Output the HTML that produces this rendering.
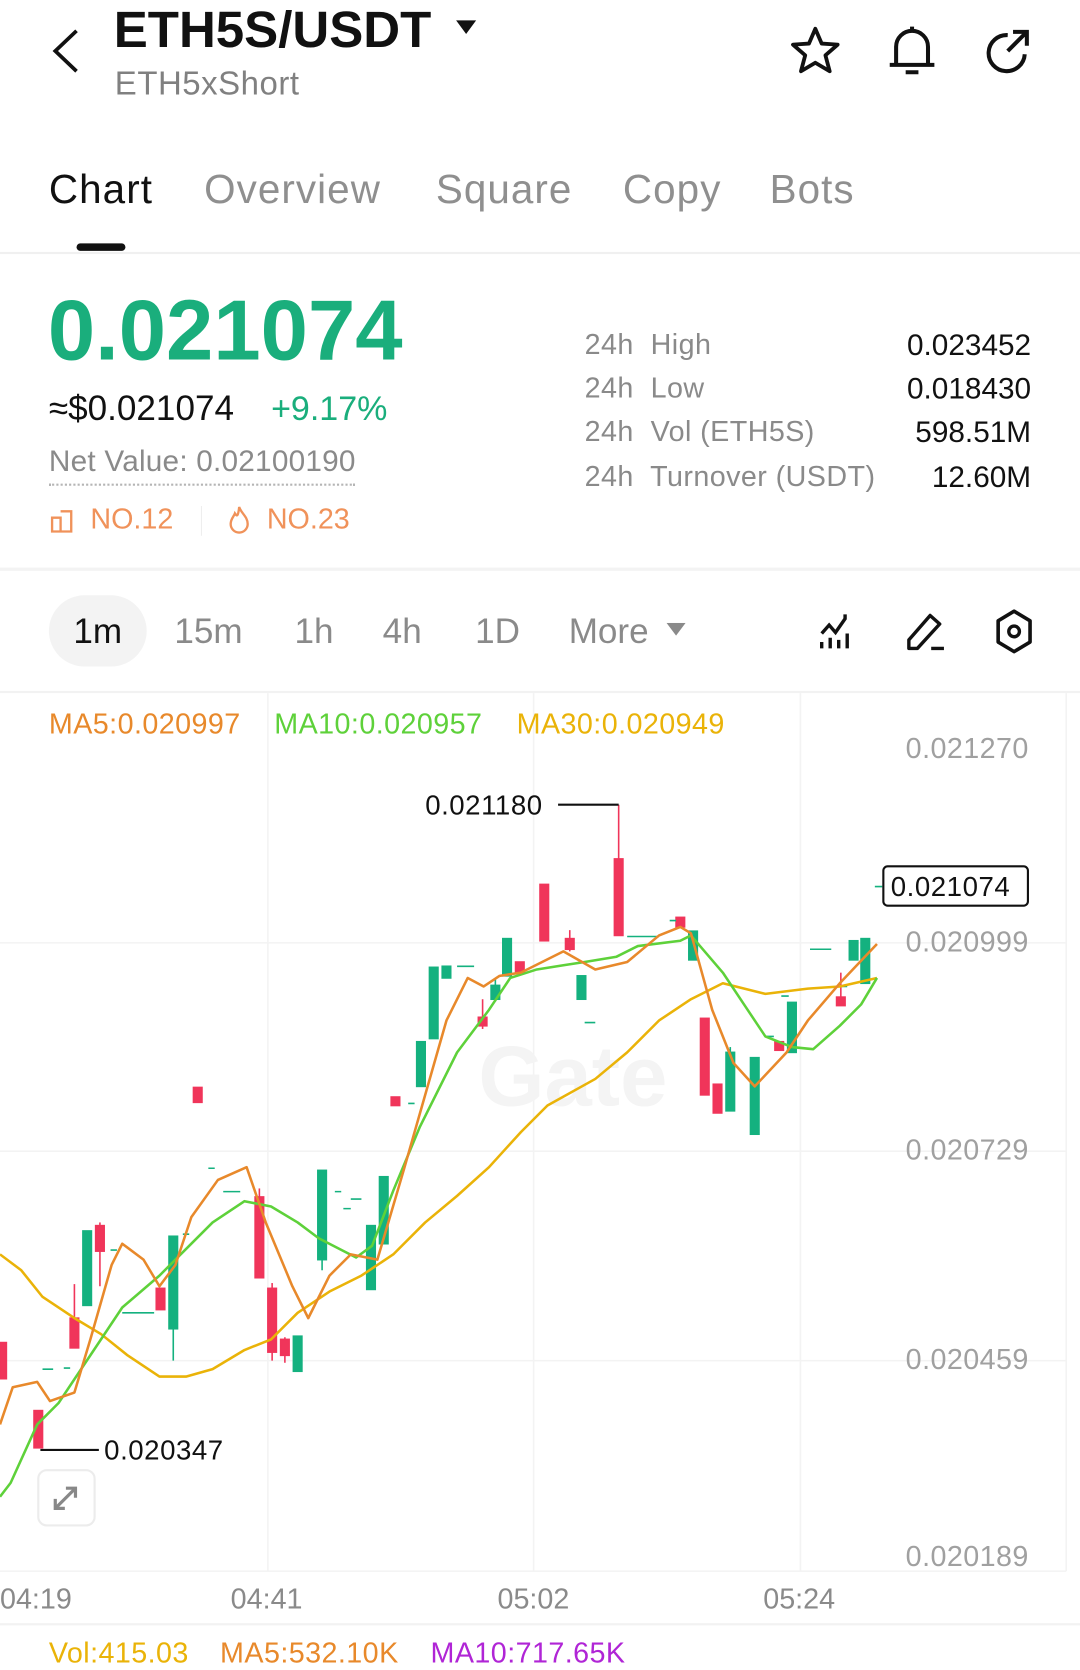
<!DOCTYPE html>
<html><head><meta charset="utf-8"><style>
html,body{margin:0;padding:0;background:#fff;overflow:hidden}
body{width:1080px;height:1666px}
#w{position:absolute;left:0;top:0;width:1016px;height:1568px;transform:scale(1.063);transform-origin:0 0;font-family:"Liberation Sans",sans-serif;color:#111}
.a{position:absolute;white-space:nowrap}
.g{color:#8a8a8a}
.tab{position:absolute;top:158px;font-size:38px;color:#8f8f8f;letter-spacing:1px}
.st{position:absolute;left:550px;font-size:27px;color:#8a8a8a;letter-spacing:.4px}
.sv{position:absolute;right:46px;font-size:28px;color:#111}
.iv{position:absolute;top:575px;font-size:33px;color:#8a8a8a}
.ya{position:absolute;left:852px;font-size:27px;color:#a0a0a0;letter-spacing:.4px}
.xa{position:absolute;top:1489px;font-size:27px;color:#8a8a8a}
</style></head><body><div id="w">
<svg class="a" style="left:44px;top:26px" width="36" height="44" viewBox="0 0 36 44"><path d="M28 3 L8 22 L28 41" fill="none" stroke="#111" stroke-width="3.5"/></svg>
<div class="a" style="left:107px;top:1px;font-size:48px;font-weight:bold;letter-spacing:0px">ETH5S/USDT</div>
<svg class="a" style="left:429px;top:19px" width="20" height="14"><path d="M0 0 H19 L9.5 13Z" fill="#111"/></svg>
<div class="a g" style="left:108px;top:61px;font-size:31px;color:#808080;letter-spacing:.5px">ETH5xShort</div>
<svg class="a" style="left:742px;top:24px" width="50" height="46" viewBox="0 0 50 46"><path d="M25 3 L31 17 L46 18 L34.5 28 L38.5 43 L25 35 L11.5 43 L15.5 28 L4 18 L19 17Z" fill="none" stroke="#111" stroke-width="3.6" stroke-linejoin="round"/></svg>
<svg class="a" style="left:834px;top:22px" width="48" height="50" viewBox="0 0 48 50"><path d="M24 3 V7 M9 39 V22 A15 15 0 0 1 39 22 V39 M3 39 H45 M18 46 H30" fill="none" stroke="#111" stroke-width="3.8"/></svg>
<svg class="a" style="left:924px;top:24px" width="48" height="48" viewBox="0 0 48 48"><path d="M40 27 A17 17 0 1 1 24 9" fill="none" stroke="#111" stroke-width="3.8"/><path d="M24 24 L41 7 M29 6 H42 V19" fill="none" stroke="#111" stroke-width="3.8"/></svg>
<div class="tab" style="left:46px;color:#111">Chart</div>
<div class="tab" style="left:192px">Overview</div>
<div class="tab" style="left:410px">Square</div>
<div class="tab" style="left:586px">Copy</div>
<div class="tab" style="left:724px">Bots</div>
<div class="a" style="left:72px;top:229px;width:46px;height:7px;border-radius:4px;background:#111"></div>
<div class="a" style="left:0;top:237px;width:1016px;height:2px;background:#f0f0f0"></div>
<div class="a" style="left:45px;top:265px;font-size:80px;font-weight:bold;color:#1aae7c;letter-spacing:0px">0.021074</div>
<div class="a" style="left:46px;top:365px;font-size:33px">≈$0.021074</div>
<div class="a" style="left:255px;top:366px;font-size:32px;color:#1aae7c">+9.17%</div>
<div class="a" style="left:46px;top:418px;font-size:28px;color:#8a8a8a;letter-spacing:.2px">Net Value: 0.02100190</div>
<div class="a" style="left:46px;top:455px;width:288px;border-top:2px dotted #b5b5b5"></div>
<svg class="a" style="left:47px;top:478px" width="24" height="24"><path d="M2 9 H10 V22 H2Z M10 3 H20 V22 H10" fill="none" stroke="#f0925a" stroke-width="2.2"/></svg>
<div class="a" style="left:85px;top:473px;font-size:27px;color:#f0925a">NO.12</div>
<div class="a" style="left:189px;top:476px;width:1px;height:28px;background:#eee"></div>
<svg class="a" style="left:213px;top:475px" width="24" height="28"><path d="M12 2 C14 8 20 11 20 18 A8 8 0 0 1 4 18 C4 13 7 11 8 8 C10 11 11 11 12 2Z" fill="none" stroke="#f0925a" stroke-width="2.2"/></svg>
<div class="a" style="left:251px;top:473px;font-size:27px;color:#f0925a">NO.23</div>
<div class="st" style="top:309px">24h&nbsp; High</div><div class="sv" style="top:309px">0.023452</div>
<div class="st" style="top:350px">24h&nbsp; Low</div><div class="sv" style="top:350px">0.018430</div>
<div class="st" style="top:391px">24h&nbsp; Vol (ETH5S)</div><div class="sv" style="top:391px">598.51M</div>
<div class="st" style="top:433px">24h&nbsp; Turnover (USDT)</div><div class="sv" style="top:433px">12.60M</div>
<div class="a" style="left:0;top:534px;width:1016px;height:3px;background:#f3f3f3"></div>
<div class="a" style="left:46px;top:560px;width:92px;height:67px;border-radius:34px;background:#f3f3f3"></div>
<div class="iv" style="left:69px;color:#111">1m</div>
<div class="iv" style="left:164px">15m</div>
<div class="iv" style="left:277px">1h</div>
<div class="iv" style="left:360px">4h</div>
<div class="iv" style="left:447px">1D</div>
<div class="iv" style="left:535px">More</div>
<svg class="a" style="left:627px;top:586px" width="19" height="13"><path d="M0 0 H18 L9 12Z" fill="#8a8a8a"/></svg>
<svg class="a" style="left:770px;top:574px" width="40" height="40" viewBox="0 0 40 40"><path d="M3 22 L10 14 L16 21 L25 8 L25 4 M3 36 V30 M11 36 V26 M19 36 V28 M27 36 V22" fill="none" stroke="#111" stroke-width="3.2"/></svg>
<svg class="a" style="left:851px;top:574px" width="42" height="40" viewBox="0 0 42 40"><path d="M4 36 V28 L24 5 L33 13 L12 36Z M25 36 H37" fill="none" stroke="#111" stroke-width="3.2" stroke-linejoin="round"/></svg>
<svg class="a" style="left:934px;top:572px" width="40" height="44" viewBox="0 0 40 44"><path d="M20 3 L35 12 V32 L20 41 L5 32 V12Z" fill="none" stroke="#111" stroke-width="3.4" stroke-linejoin="round"/><circle cx="20" cy="22" r="5" fill="none" stroke="#111" stroke-width="3.2"/></svg>
<div class="a" style="left:0;top:650px;width:1016px;height:2px;background:#f2f2f2"></div>
<svg class="a" style="left:0;top:0" width="1016" height="1568">
<g stroke="#f3f3f3" stroke-width="1.5"><path d="M252 652 V1478 M502 652 V1478 M753 652 V1478 M1003 652 V1478 M0 887 H1003 M0 1083 H1003 M0 1280 H1003 M0 1478 H1003"/></g>
<text x="450" y="1040" font-family="Liberation Sans" font-weight="bold" font-size="80" fill="#f4f4f4">Gate</text>
<g fill="#f0355a" stroke="#f0355a" stroke-width="1.5">
<rect x="0" y="1263" width="6" height="34"/><rect x="32" y="1327" width="8" height="35"/>
<path d="M70 1208 V1268"/><rect x="66" y="1240" width="8" height="28"/>
<path d="M94 1150 V1210"/><rect x="90" y="1153" width="8" height="24"/>
<rect x="147" y="1212" width="8" height="20"/><rect x="182" y="1023" width="8" height="14"/>
<path d="M244 1118 V1202"/><rect x="240" y="1126" width="8" height="76"/>
<path d="M256 1207 V1280"/><rect x="252" y="1212" width="8" height="60"/>
<path d="M268 1258 V1282"/><rect x="264" y="1260" width="8" height="15"/>
<rect x="368" y="1032" width="8" height="8"/>
<path d="M454 940 V968"/><rect x="450" y="957" width="8" height="8"/>
<rect x="485" y="905" width="8" height="10"/><rect x="508" y="832" width="8" height="53"/>
<path d="M536 875 V895"/><rect x="532" y="883" width="8" height="10"/>
<path d="M582 757 V880"/><rect x="578" y="808" width="8" height="72"/>
<rect x="636" y="863" width="8" height="9"/><rect x="659" y="958" width="8" height="72"/>
<rect x="671" y="1020" width="8" height="27"/><rect x="729" y="980" width="8" height="8"/>
<path d="M791 915 V945"/><rect x="787" y="938" width="8" height="8"/>
</g>
<g fill="#14b17f" stroke="#14b17f" stroke-width="1.5">
<rect x="78" y="1158" width="8" height="70"/><path d="M163 1163 V1280"/><rect x="159" y="1163" width="8" height="87"/>
<rect x="276" y="1257" width="8" height="33"/><path d="M303 1101 V1195"/><rect x="299" y="1101" width="8" height="84"/>
<rect x="345" y="1153" width="8" height="60"/><rect x="357" y="1107" width="8" height="63"/>
<rect x="392" y="980" width="8" height="42"/><rect x="404" y="910" width="8" height="67"/><rect x="416" y="909" width="8" height="11"/>
<path d="M466 920 V942"/><rect x="462" y="927" width="8" height="13"/><rect x="473" y="883" width="8" height="35"/>
<rect x="543" y="918" width="8" height="22"/><rect x="648" y="876" width="8" height="27"/>
<path d="M687 985 V1045"/><rect x="683" y="990" width="8" height="55"/><rect x="706" y="995" width="8" height="72"/>
<rect x="741" y="943" width="8" height="47"/><rect x="799" y="885" width="8" height="18"/><rect x="810" y="883" width="8" height="42"/>
<path d="M40 1288 H50 M60 1287 H66 M104 1176 H110 M115 1235 H145 M172 1161 H178 M196 1099 H202 M210 1121 H226 M315 1121 H321 M323 1137 H330 M330 1128 H340 M384 1038 H390 M430 909 H446 M550 962 H560 M590 881 H620 M630 866 H636 M762 893 H782 M790 928 H797 M720 975 H728 M735 937 H742 M823 834 H830"/>
</g>
<g fill="none" stroke-width="2.4" stroke-linejoin="round">
<polyline stroke="#eab308" points="0,1180 20,1195 40,1220 70,1240 95,1255 120,1275 150,1295 175,1295 200,1288 230,1270 255,1260 280,1235 310,1215 340,1200 370,1180 400,1150 430,1125 460,1098 490,1065 515,1040 560,1015 590,990 620,960 650,940 680,925 720,935 760,930 790,928 825,920"/>
<polyline stroke="#5ed13a" points="0,1408 10,1395 35,1340 55,1320 75,1290 95,1260 115,1230 150,1200 180,1170 200,1150 230,1130 255,1135 280,1150 300,1165 335,1183 350,1172 370,1120 395,1060 430,990 460,950 480,920 505,912 530,908 550,905 580,900 600,890 640,885 650,880 680,915 700,945 720,975 745,985 765,987 790,965 810,945 825,920"/>
<polyline stroke="#e8892b" points="0,1340 12,1305 35,1300 47,1318 70,1310 85,1260 105,1190 115,1170 135,1185 150,1210 165,1190 180,1145 205,1110 232,1098 250,1150 275,1210 290,1240 310,1200 330,1180 355,1185 380,1100 400,1030 420,960 440,920 455,928 470,918 490,915 510,905 530,895 560,912 590,905 620,880 640,872 650,878 670,950 690,1000 710,1022 740,990 760,960 790,925 825,888"/>
</g>
<path d="M525 757 H582 M38 1364 H93" stroke="#111" stroke-width="2"/>
<text x="400" y="766" font-family="Liberation Sans" font-size="26" fill="#111" letter-spacing=".5">0.021180</text>
<text x="98" y="1373" font-family="Liberation Sans" font-size="26" fill="#111" letter-spacing=".5">0.020347</text>
<rect x="831" y="815" width="136" height="37" rx="4" fill="#fff" stroke="#111" stroke-width="2"/>
<text x="838" y="843" font-family="Liberation Sans" font-size="26" fill="#111" letter-spacing=".5">0.021074</text>
<rect x="36" y="1383" width="53" height="52" rx="8" fill="#fff" stroke="#ececec" stroke-width="2"/>
<path d="M52 1419 L71 1400 M52 1410 V1419 H61 M71 1409 V1400 H62" fill="none" stroke="#888" stroke-width="3"/>
</svg>
<div class="a" style="left:46px;top:666px;font-size:27px;color:#e8892b;letter-spacing:.4px">MA5:0.020997</div>
<div class="a" style="left:258px;top:666px;font-size:27px;color:#5ed13a;letter-spacing:.4px">MA10:0.020957</div>
<div class="a" style="left:486px;top:666px;font-size:27px;color:#eab308;letter-spacing:.4px">MA30:0.020949</div>
<div class="ya" style="top:689px">0.021270</div>
<div class="ya" style="top:871px">0.020999</div>
<div class="ya" style="top:1067px">0.020729</div>
<div class="ya" style="top:1264px">0.020459</div>
<div class="ya" style="top:1449px">0.020189</div>
<div class="xa" style="left:0">04:19</div>
<div class="xa" style="left:217px">04:41</div>
<div class="xa" style="left:468px">05:02</div>
<div class="xa" style="left:718px">05:24</div>
<div class="a" style="left:0;top:1527px;width:1016px;height:2px;background:#f2f2f2"></div>
<div class="a" style="left:46px;top:1540px;font-size:27px;color:#eab308;letter-spacing:.4px">Vol:415.03</div>
<div class="a" style="left:207px;top:1540px;font-size:27px;color:#e8892b;letter-spacing:.4px">MA5:532.10K</div>
<div class="a" style="left:405px;top:1540px;font-size:27px;color:#b025d6;letter-spacing:.4px">MA10:717.65K</div>
</div></body></html>
